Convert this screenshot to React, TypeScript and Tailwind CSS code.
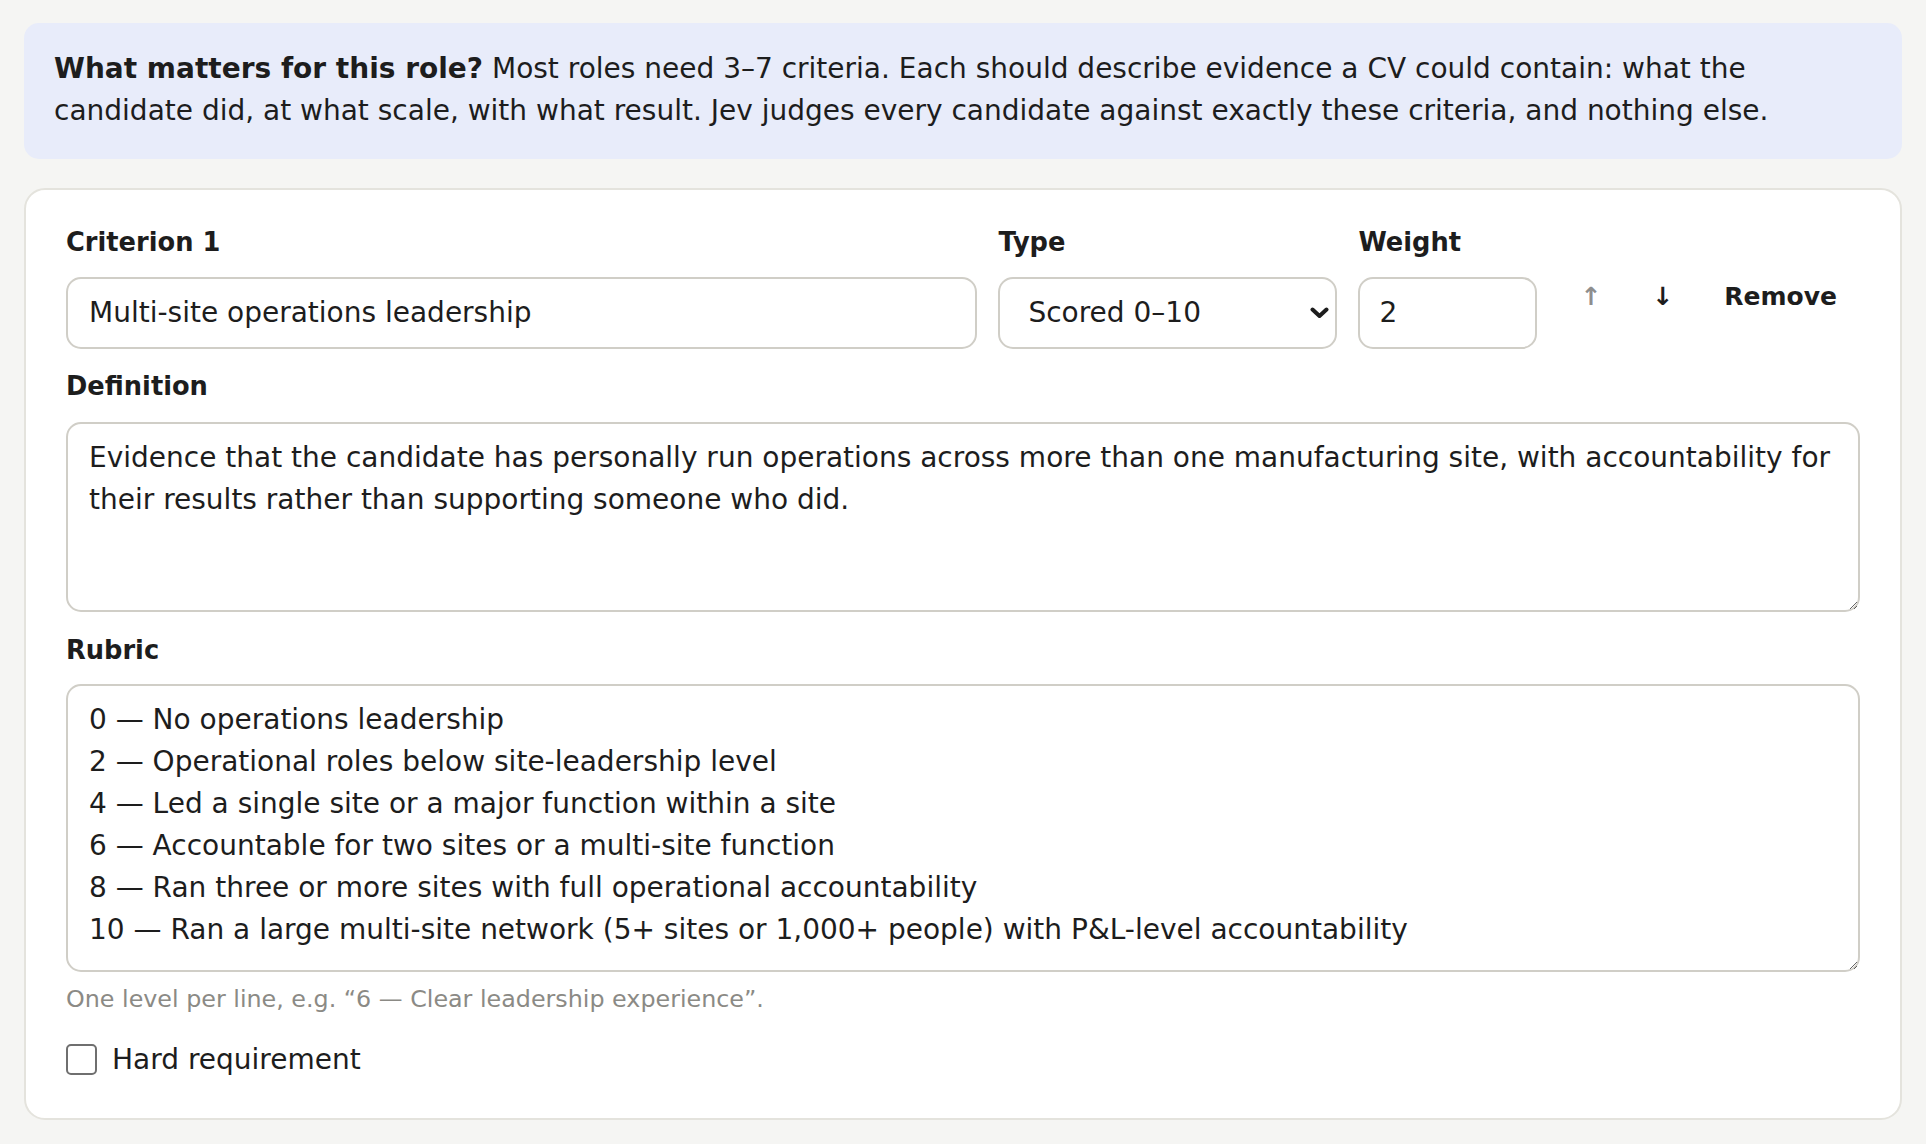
import React, { useState } from 'react';

const rubricText = [
  '0 — No operations leadership',
  '2 — Operational roles below site-leadership level',
  '4 — Led a single site or a major function within a site',
  '6 — Accountable for two sites or a multi-site function',
  '8 — Ran three or more sites with full operational accountability',
  '10 — Ran a large multi-site network (5+ sites or 1,000+ people) with P&L-level accountability',
].join('\n');

const fieldClass =
  'w-full rounded-[15px] border-2 border-[#d0cec7] bg-white text-[28px] text-[#1d1d1d] outline-none';

const Label = ({ children, className = '' }: { children: React.ReactNode; className?: string }) => (
  <label className={`block text-[25.7px] font-bold leading-[37.5px] text-[#1d1d1d] ${className}`}>{children}</label>
);

const CriteriaEditor = () => {
  const [name, setName] = useState('Multi-site operations leadership');
  const [type, setType] = useState('scored');
  const [weight, setWeight] = useState('2');
  const [definition, setDefinition] = useState(
    'Evidence that the candidate has personally run operations across more than one manufacturing site, with accountability for their results rather than supporting someone who did.'
  );
  const [rubric, setRubric] = useState(rubricText);
  const [hard, setHard] = useState(false);

  return (
    <div className="min-h-screen bg-[#f5f5f3] px-[24px] pt-[23px] pb-[24px] font-['DejaVu_Sans',sans-serif] text-[#1d1d1d]">
      {/* Intro */}
      <div className="rounded-[15px] bg-[#e8ecfa] pl-[30px] pr-[24px] pt-[25px] pb-[27px] text-[28px] leading-[42px]">
        <strong className="font-bold">What matters for this role?</strong> Most roles need 3–7 criteria. Each should
        describe evidence a CV could contain: what the candidate did, at what scale, with what result. Jev judges every
        candidate against exactly these criteria, and nothing else.
      </div>

      {/* Criterion card */}
      <div className="mt-[29px] rounded-[21px] border-2 border-[#e4e3dd] bg-white px-[40px] pt-[34px] pb-[37px]">
        <div className="grid grid-cols-[1fr_339px_179px_auto] gap-x-[21px] gap-y-[15px]">
          <Label>Criterion 1</Label>
          <Label>Type</Label>
          <Label>Weight</Label>
          <div />

          <input
            value={name}
            onChange={e => setName(e.target.value)}
            className={`${fieldClass} h-[72px] px-[21px]`}
          />
          <div className="relative">
            <select
              value={type}
              onChange={e => setType(e.target.value)}
              className={`${fieldClass} h-[72px] appearance-none pl-[28px] pr-[40px]`}
            >
              <option value="scored">Scored 0–10</option>
              <option value="pass">Pass / fail</option>
            </select>
            <svg
              className="pointer-events-none absolute right-[8px] top-[36px] h-[12px] w-[19px] -translate-y-1/2"
              viewBox="0 0 19 12"
              fill="none"
            >
              <path d="M2.5 2.5 L9.5 9 L16.5 2.5" stroke="#1d1d1d" strokeWidth="4" strokeLinecap="round" strokeLinejoin="round" />
            </svg>
          </div>
          <input
            value={weight}
            onChange={e => setWeight(e.target.value)}
            className={`${fieldClass} h-[72px] px-[19px]`}
          />
          <div className="flex items-start gap-[9px] pt-[1px] pr-[2px]">
            <button className="pl-[22px] pr-[21px] text-[25px] font-bold leading-[37.5px] text-[#8e8e8e]" disabled>
              ↑
            </button>
            <button className="px-[21px] text-[25px] font-bold leading-[37.5px] text-[#1d1d1d]">↓</button>
            <button className="px-[21px] text-[25px] font-bold leading-[37.5px] text-[#1d1d1d]">Remove</button>
          </div>
        </div>

        <Label className="mt-[19px] mb-[17px]">Definition</Label>
        <textarea
          value={definition}
          onChange={e => setDefinition(e.target.value)}
          className={`${fieldClass} block h-[190px] px-[21px] pt-[13px] leading-[42px]`}
        />

        <Label className="mt-[20px] mb-[14px]">Rubric</Label>
        <textarea
          value={rubric}
          onChange={e => setRubric(e.target.value)}
          className={`${fieldClass} block h-[288px] px-[21px] pt-[13px] leading-[42px]`}
        />
        <p className="mt-[9px] text-[23.8px] leading-[36px] text-[#8b8a85]">
          One level per line, e.g. “6 — Clear leadership experience”.
        </p>

        <label className="mt-[22px] flex items-center gap-[15px] text-[28px] leading-[42px]">
          <input
            type="checkbox"
            checked={hard}
            onChange={e => setHard(e.target.checked)}
            className="h-[31px] w-[31px] appearance-none rounded-[5px] border-2 border-[#6f6f6f] bg-white checked:bg-[#1d1d1d]"
          />
          Hard requirement
        </label>
      </div>
    </div>
  );
};

export default CriteriaEditor;
